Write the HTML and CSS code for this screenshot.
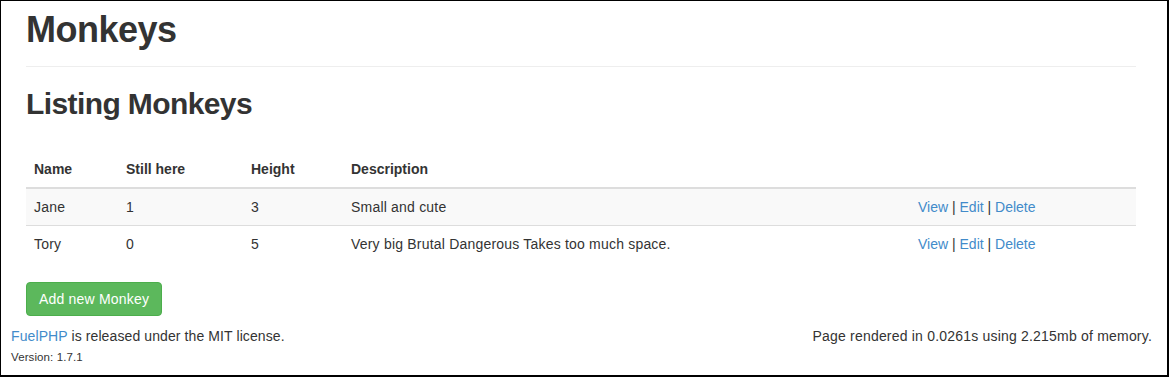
FILE: index.html
```html
<!DOCTYPE html>
<html lang="en">
<head>
  <meta charset="UTF-8">
  <title>Monkeys</title>
  <link rel="stylesheet" href="styles.css">
</head>
<body>
  <div class="page">
    <div class="container">
      <div class="page-header">
        <h1>Monkeys</h1>
      </div>

      <h2>Listing Monkeys</h2>

      <table class="table">
        <colgroup>
          <col class="col-name">
          <col class="col-still">
          <col class="col-height">
          <col class="col-desc">
          <col>
        </colgroup>
        <thead>
          <tr>
            <th>Name</th>
            <th>Still here</th>
            <th>Height</th>
            <th>Description</th>
            <th></th>
          </tr>
        </thead>
        <tbody>
          <tr>
            <td>Jane</td>
            <td>1</td>
            <td>3</td>
            <td>Small and cute</td>
            <td class="actions"><a href="#">View</a> | <a href="#">Edit</a> | <a href="#">Delete</a></td>
          </tr>
          <tr>
            <td>Tory</td>
            <td>0</td>
            <td>5</td>
            <td>Very big Brutal Dangerous Takes too much space.</td>
            <td class="actions"><a href="#">View</a> | <a href="#">Edit</a> | <a href="#">Delete</a></td>
          </tr>
        </tbody>
      </table>

      <p><a href="#" class="btn btn-success">Add new Monkey</a></p>
    </div>

    <footer class="foot">
      <p class="license">
        <a href="#">FuelPHP</a> is released under the MIT license.<br>
        <small>Version: 1.7.1</small>
      </p>
      <p class="pull-right">Page rendered in 0.0261s using 2.215mb of memory.</p>
    </footer>
  </div>
</body>
</html>
```

FILE: styles.css
```css
html, body {
  margin: 0;
  padding: 0;
  background: #fff;
}

body {
  font-family: "Liberation Sans", Arial, sans-serif;
  font-size: 14px;
  line-height: 20px;
  letter-spacing: 0.2px;
  color: #333;
}

a {
  color: #428bca;
  text-decoration: none;
}

.page {
  height: 377px;
  box-sizing: border-box;
  border: 1px solid #000;
  border-right-width: 2px;
  border-bottom-width: 2px;
  overflow: hidden;
}

.container {
  width: 1110px;
  margin-left: 25px;
}

.page-header {
  padding-bottom: 16px;
  border-bottom: 1px solid #eee;
}

h1 {
  margin: 9px 0 0;
  font-size: 36px;
  line-height: 40px;
  font-weight: bold;
  letter-spacing: -0.5px;
}

h2 {
  margin: 20px 0 31px;
  font-size: 30px;
  line-height: 33px;
  font-weight: bold;
  letter-spacing: -0.6px;
}

.table {
  width: 100%;
  border-collapse: collapse;
  border-spacing: 0;
  margin-bottom: 20px;
}

.col-name { width: 92px; }
.col-still { width: 125px; }
.col-height { width: 100px; }
.col-desc { width: 567px; }

.table th,
.table td {
  padding: 8px;
  text-align: left;
  vertical-align: top;
}

.table th {
  font-weight: bold;
  letter-spacing: 0;
  border-bottom: 2px solid #ddd;
}

.table td {
  border-top: 1px solid #ddd;
}

.table td.actions {
  letter-spacing: 0;
}

.table tbody tr:nth-child(odd) td {
  background: #f9f9f9;
}

p {
  margin: 0;
}

.btn {
  display: inline-block;
  padding: 6px 12px;
  border: 1px solid transparent;
  border-radius: 4px;
  font-size: 14px;
  line-height: 20px;
}

.btn-success {
  color: #fff;
  background: #5cb85c;
  border-color: #4cae4c;
}

.foot {
  display: flex;
  justify-content: space-between;
  margin-top: 10px;
  padding: 0 15px 0 10px;
}

.foot .license {
  letter-spacing: 0.1px;
}

.foot small {
  font-size: 11.5px;
}
```
